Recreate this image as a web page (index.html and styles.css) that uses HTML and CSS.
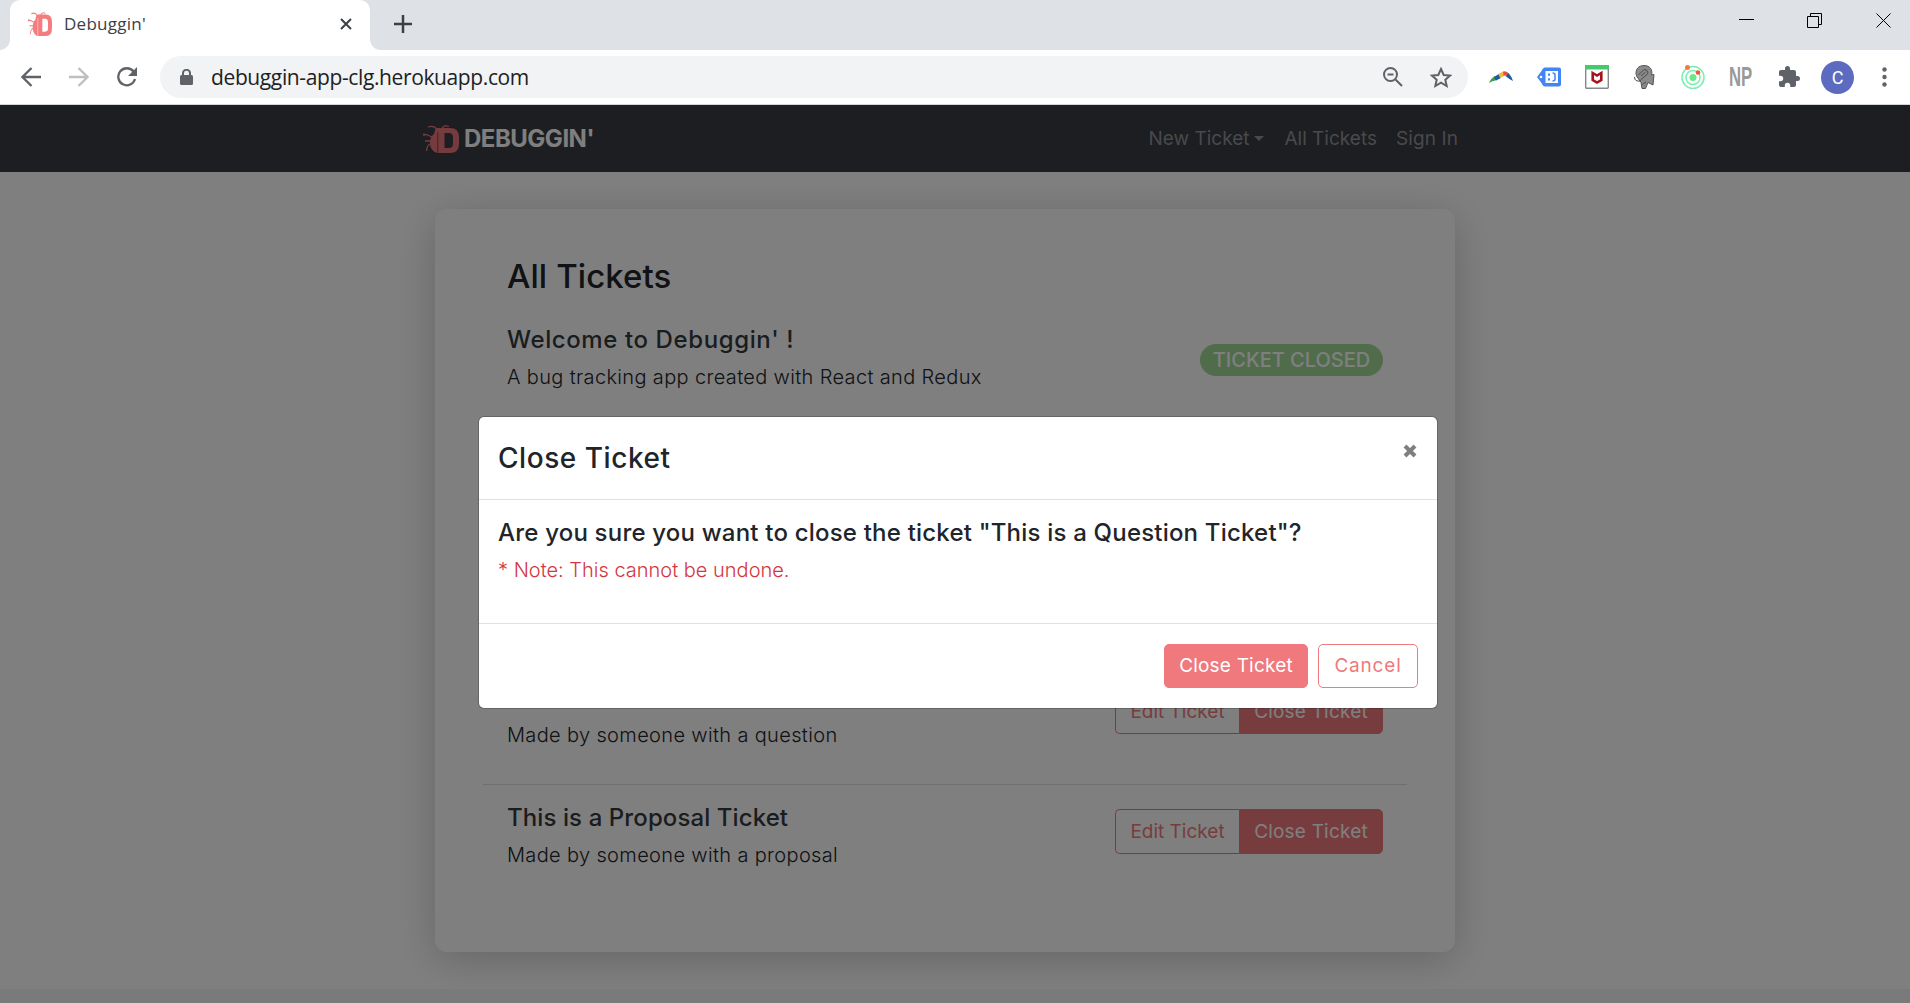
FILE: index.html
```html
<!DOCTYPE html>
<html lang="en">
<head>
<meta charset="utf-8">
<title>Debuggin'</title>
<link rel="stylesheet" href="styles.css">
</head>
<body>
<svg class="defs" width="0" height="0" aria-hidden="true">
  <symbol id="bug" viewBox="0 0 36 28" preserveAspectRatio="none">
    <path fill="currentColor" fill-rule="evenodd" d="M15.200 3H27Q36 3 36 12V19Q36 28 27 28H15.200ZM21.500 8V23H26Q30 23 30 18.500V12.500Q30 8 26 8Z"/>
    <path fill="currentColor" d="M12 5.500C12.500 3.500 14 3 16 3V7H14.500V28C10 27 7 23 7 18C7 14 8.500 10.500 11 9Z"/>
    <path fill="none" stroke="currentColor" stroke-width="1.300" d="M14 4.500C12 1.500 9 .6 5 2M19 3.500C20 1 23 .4 26 1.500M10 12C6 11.500 5 9 0 9.500M8 16H2M8 19C5 19.500 4 21 3.500 26M1 8.500V11"/>
  </symbol>
</svg>
<header class="browser">
  <div class="tabstrip">
    <div class="tab">
      <svg class="favicon"><use href="#bug"/></svg>
      <span class="tab-title">Debuggin'</span>
      <svg class="tab-close" viewBox="0 0 12 12"><path d="M1 1 11 11M11 1 1 11"/></svg>
    </div>
    <svg class="new-tab" viewBox="0 0 18 18"><path d="M9 0V18M0 9H18"/></svg>
    <div class="window-controls">
      <svg viewBox="0 0 16 16"><path d="M0 6.500H15"/></svg>
      <svg viewBox="0 0 16 16"><path d="M.5 3.500H11.500V14.500H.5ZM3.500 3.500V.5H14.500V11.500H11.500"/></svg>
      <svg viewBox="0 0 16 16"><path d="M.5 .5 14.500 14.500M14.500 .5 .5 14.500"/></svg>
    </div>
  </div>
  <div class="toolbar">
    <svg class="nav-icon" viewBox="0 0 20 20"><path d="M20 10H2M10.500 1 1.500 10 10.500 19"/></svg>
    <svg class="nav-icon muted" viewBox="0 0 20 20"><path d="M0 10H18M9.500 1 18.500 10 9.500 19"/></svg>
    <svg class="nav-icon" viewBox="0 0 20 20"><path d="M16.500 4.500A8.500 8.500 0 1 0 18 12"/><path class="solid" d="M20 0V9H11Z"/></svg>
    <div class="omnibox">
      <svg class="lock" viewBox="0 0 13 16"><path class="solid" d="M1.500 6H11.500Q13 6 13 7.500V14.500Q13 16 11.500 16H1.500Q0 16 0 14.500V7.500Q0 6 1.500 6Z"/><path d="M3 7V4A3.500 3.200 0 0 1 10 4V7"/></svg>
      <span class="url">debuggin-app-clg.herokuapp.com</span>
      <svg class="zoom" viewBox="0 0 20 20"><circle cx="7.500" cy="7.500" r="6.500"/><path d="M12.500 12.500 19 19M4.500 7.500H10.500"/></svg>
      <svg class="star" viewBox="0 0 22 21"><path d="M11 2 13.700 8 20 8.600 15.300 12.800 16.700 19 11 15.700 5.300 19 6.700 12.800 2 8.600 8.300 8Z"/></svg>
    </div>
    <div class="extensions">
      <svg viewBox="0 0 24 24"><path fill="#3f9b50" d="M0 18Q2 13 6 11L8 15Q3 16 0 18Z"/><path fill="#1c5aa8" d="M5 12 10 9 12 13 7 15.500Z"/><path fill="#f5b83d" d="M9.500 9 14 6.500 15 11 11 13Z"/><path fill="#e0533d" d="M14 6.500Q18 5.500 20 9L17 11.500Q16.500 10 14.500 11Z"/><path fill="#1c5aa8" d="M19.500 8Q23 12 24 16Q20 14 17 11.500Z"/></svg>
      <svg viewBox="0 0 24 24"><path fill="#4285f4" d="M8 2.500H22Q24 2.500 24 4.500V19.500Q24 21.500 22 21.500H8Q6 21.500 4.500 18L0 12 4.500 6Q6 2.500 8 2.500Z"/><path fill="#fff" d="M8.500 6H21V18H8.500Z"/><circle cx="4" cy="12" r="1.300" fill="#fff"/><path fill="#4285f4" d="M11 8.500H13V10.700H11ZM11 13.300H13V15.500H11Z"/><path fill="none" stroke="#4285f4" stroke-width="1.500" d="M15.500 8Q18 8 18 10V14Q18 16 15.500 16"/></svg>
      <svg viewBox="0 0 24 24"><rect x=".7" y=".7" width="22.600" height="22.600" rx="1" fill="#fff" stroke="#888" stroke-width="1.400"/><path fill="#45c96b" d="M0 0H24V4.500H0Z"/><path fill="none" stroke="#a8121b" stroke-width="2.600" d="M7.700 8 12 10.500 16.300 8V15L12 17.500 7.700 15Z"/></svg>
      <svg viewBox="0 0 24 24"><path fill="#8a8a8a" stroke="#555" d="M3.500 11C1.500 4 6 .5 11 .5C17 .5 20 5 18.500 10L21 9.500 20 20 15 17.500 12.500 23.500H9L8 17.500Z"/><path fill="none" stroke="#4a4a4a" d="M5.500 10 11 4.500Q16 5 14.500 9L7.500 15M8 11 12.500 7M1.500 12Q1.500 17 8 16M9.500 19.500 13 17"/></svg>
      <svg viewBox="0 0 24 24"><circle cx="12" cy="12.500" r="3.500" fill="#69e889"/><g fill="none" stroke="#78efb0" stroke-width="1.500"><circle cx="12" cy="12.500" r="7"/><circle cx="12" cy="12.500" r="11"/></g><circle cx="6.500" cy="2.500" r="2.500" fill="#ee7d35"/><circle cx="17" cy="7.500" r="2.300" fill="#ee5533"/></svg>
      <span class="np">NP</span>
      <svg viewBox="0 0 24 24"><path fill="#5f6368" d="M20.500 11H19V7c0-1.100-.9-2-2-2h-4V3.500a2.500 2.500 0 0 0-5 0V5H4c-1.100 0-2 .9-2 2v3.800h1.500a2.700 2.700 0 0 1 0 5.400H2V20c0 1.100.9 2 2 2h3.800v-1.500a2.700 2.700 0 0 1 5.400 0V22H17c1.100 0 2-.9 2-2v-4h1.500a2.500 2.500 0 0 0 0-5z"/></svg>
    </div>
    <span class="avatar">C</span>
    <svg class="menu" viewBox="0 0 5 20"><circle cx="2.500" cy="2.500" r="2.200"/><circle cx="2.500" cy="10" r="2.200"/><circle cx="2.500" cy="17.500" r="2.200"/></svg>
  </div>
</header>
<main class="viewport">
  <nav class="navbar">
    <div class="brand"><svg class="brand-icon"><use href="#bug"/></svg><span class="brand-name">DEBUGGIN'</span></div>
    <div class="links"><span class="dropdown">New Ticket</span><span class="all">All Tickets</span><span class="sign">Sign In</span></div>
  </nav>
  <section class="card">
    <h1 class="page-title">All Tickets</h1>
    <article class="ticket closed">
      <div class="info"><h2 class="t-welcome">Welcome to Debuggin' !</h2><p>A bug tracking app created with React and Redux</p></div>
      <span class="badge">TICKET CLOSED</span>
    </article>
    <div class="covered"></div>
    <article class="ticket">
      <div class="info"><h2>This is a Question Ticket</h2><p>Made by someone with a question</p></div>
      <div class="group"><button class="btn outline edit">Edit Ticket</button><button class="btn solid-btn">Close Ticket</button></div>
    </article>
    <article class="ticket">
      <div class="info"><h2>This is a Proposal Ticket</h2><p>Made by someone with a proposal</p></div>
      <div class="group"><button class="btn outline edit">Edit Ticket</button><button class="btn solid-btn">Close Ticket</button></div>
    </article>
  </section>
  <footer class="footer"></footer>
  <div class="backdrop">
    <div class="modal">
      <div class="modal-header"><h2 class="modal-title">Close Ticket</h2><svg class="modal-close" viewBox="0 0 14 14"><path d="M2 2 12 12M12 2 2 12"/></svg></div>
      <div class="modal-body"><h3 class="ask">Are you sure you want to close the ticket "This is a Question Ticket"?</h3><p class="note">* Note: This cannot be undone.</p></div>
      <div class="modal-footer"><button class="btn solid-btn">Close Ticket</button><button class="btn outline cancel">Cancel</button></div>
    </div>
  </div>
</main>
</body>
</html>
```
FILE: styles.css
```css
* { box-sizing: border-box; }
body { margin: 0; height: 1003px; overflow: hidden; display: flex; flex-direction: column; font-family: Inter, sans-serif; font-size: 19px; color: #212529; background: #fff; }
h1, h2, h3, p { margin: 0; white-space: nowrap; }
svg { display: block; flex: none; }
.defs { position: absolute; }

/* Browser window */
.browser { flex: none; height: 105px; border-bottom: 1px solid #d5d7da; font-family: "Open Sans", sans-serif; }
.tabstrip { height: 50px; display: flex; background: #dee1e6; padding-left: 10px; }
.tab { width: 360px; height: 50px; background: #fff; border-radius: 10px 10px 0 0; display: flex; align-items: center; padding: 0 18px 2px; position: relative; }
.tab::before, .tab::after { content: ""; position: absolute; bottom: 0; width: 10px; height: 10px; }
.tab::before { left: -10px; background: radial-gradient(circle at 0 0, #dee1e6 9.500px, #fff 10px); }
.tab::after { right: -10px; background: radial-gradient(circle at 100% 0, #dee1e6 9.500px, #fff 10px); }
.favicon { width: 24px; height: 24px; color: #f47c7f; }
.tab-title { margin: -2px 0 0 12px; font-size: 17px; letter-spacing: .25px; color: #3c4043; }
.tab-close { width: 12px; height: 12px; margin-left: auto; stroke: #3c4043; stroke-width: 2; }
.new-tab { width: 18px; height: 18px; margin: 15px 0 0 24px; stroke: #3c4043; stroke-width: 2.500; }
.window-controls { margin: 13px 18px 0 auto; display: flex; gap: 53px; }
.window-controls svg { width: 16px; height: 16px; fill: none; stroke: #000; stroke-width: 1; }
.window-controls svg:nth-child(2) { margin-left: -1px; }
.toolbar { height: 54px; display: flex; align-items: center; padding-left: 21px; }
.nav-icon { width: 20px; height: 20px; margin-right: 28px; fill: none; stroke: #5f6368; stroke-width: 2.300; }
.nav-icon.muted { stroke: #bdbfc1; }
.solid { fill: #5f6368; stroke: none; }
.omnibox { width: 1308px; height: 42px; margin-left: -5px; border-radius: 21px; background: #f1f3f4; display: flex; align-items: center; padding: 0 16px 0 20px; }
.omnibox svg { fill: none; stroke: #5f6368; stroke-width: 2; }
.omnibox .solid { fill: #5f6368; stroke: none; }
.lock { width: 13px; height: 16px; }
.url { margin-left: 18px; font-size: 21px; letter-spacing: -.380px; color: #202124; }
.zoom { width: 20px; height: 20px; margin-left: auto; margin-right: 27px; }
.star { width: 22px; height: 21px; }
.extensions { display: flex; gap: 24px; margin-left: 21px; align-items: center; }
.extensions svg { width: 24px; height: 24px; }
.np { width: 24px; font: bold 27px/24px "Liberation Sans", sans-serif; color: #999; transform: scaleX(.62); transform-origin: left; }
.avatar { width: 33px; height: 33px; margin-left: 20px; border-radius: 50%; background: #5c6bc0; color: #fff; font-family: Roboto, sans-serif; font-size: 18px; line-height: 33px; text-align: center; }
.menu { width: 5px; height: 20px; margin-left: 28px; fill: #5f6368; }

/* Application page */
.viewport { position: relative; flex: 1; display: flex; flex-direction: column; background: #fff; }
.navbar { height: 67px; flex: none; background: #3a3c44; padding: 0 452px 0 423px; display: flex; align-items: center; justify-content: space-between; }
.brand { display: flex; align-items: center; }
.brand-icon { width: 36px; height: 28px; color: #ed777b; }
.brand-name { margin-left: 5px; font-size: 24px; font-weight: 700; color: #fff; letter-spacing: -.5px; }
.links { display: flex; color: #929396; }
.dropdown { margin-right: 20px; display: flex; align-items: center; }
.dropdown::after { content: ""; margin-left: 5px; border: 5px solid transparent; border-top-color: currentColor; border-bottom: 0; }
.all { margin-right: 19px; }
.sign { letter-spacing: .1px; }
.card { width: 1020px; height: 743px; flex: none; margin: 37px 0 0 435px; border-radius: 12px; background: #fff; box-shadow: 0 8px 40px rgba(0, 0, 0, .2); padding: 46px 48px 0; }
.page-title { height: 51px; padding-left: 24px; font-size: 33px; font-weight: 500; line-height: 42px; letter-spacing: .08px; }
.ticket { height: 120px; display: flex; align-items: flex-start; padding: 18px 24px 0; border-bottom: 1px solid #dfdfdf; }
.ticket:last-child { border: 0; }
.info { flex: 1; }
.ticket h2 { font-size: 24px; font-weight: 500; line-height: 30px; letter-spacing: .1px; color: #343a40; }
.ticket .t-welcome { letter-spacing: .6px; }
.ticket p { margin-top: 7px; font-size: 20px; letter-spacing: .35px; line-height: 30px; font-weight: 300; }
.badge { width: 183px; height: 32px; margin-top: 19px; border-radius: 16px; background: #a0d894; color: #fff; font-size: 20px; font-weight: 500; line-height: 32px; text-align: center; }
.ticket.closed { height: 119px; padding-top: 19px; }
.covered { height: 240px; }
.btn { height: 44px; padding: 0; border: 1px solid #ef797d; border-radius: 5px; font: 400 19px/42px Inter, sans-serif; letter-spacing: .2px; }
.solid-btn { width: 144px; background: #ef797d; color: #fff; }
.outline { background: #fff; color: #ef797d; }
.group { display: flex; margin-top: 6px; }
.group .btn { height: 45px; }
.group .edit { width: 124px; border-radius: 5px 0 0 5px; border-right: 0; letter-spacing: 0; }
.group .solid-btn { border-radius: 0 5px 5px 0; }
.footer { height: 14px; margin-top: auto; background: #f1f6f3; }

/* Dialog over the page */
.backdrop { position: absolute; inset: 0; background: rgba(0, 0, 0, .5); padding: 311px 0 0 478px; }
.modal { width: 960px; height: 293px; border: 1px solid rgba(0, 0, 0, .2); background: #fff; background-clip: padding-box; border-radius: 6px; }
.modal-header { height: 83px; border-bottom: 1px solid #dee2e6; padding: 21px 19px; display: flex; justify-content: space-between; }
.modal-title { font-size: 28px; font-weight: 500; line-height: 40px; letter-spacing: .55px; }
.modal-close { width: 14px; height: 14px; margin: 6px 1px 0; stroke: #7f7f7f; stroke-width: 4; }
.modal-body { height: 124px; border-bottom: 1px solid #dee2e6; padding: 18px 19px; }
.ask { font-size: 24px; font-weight: 500; line-height: 30px; letter-spacing: .2px; }
.note { margin-top: 7px; font-size: 20px; line-height: 30px; color: #d4363f; font-weight: 300; }
.modal-footer { padding: 20px 19px; display: flex; justify-content: flex-end; gap: 10px; }
.cancel { width: 100px; letter-spacing: .8px; }
```
